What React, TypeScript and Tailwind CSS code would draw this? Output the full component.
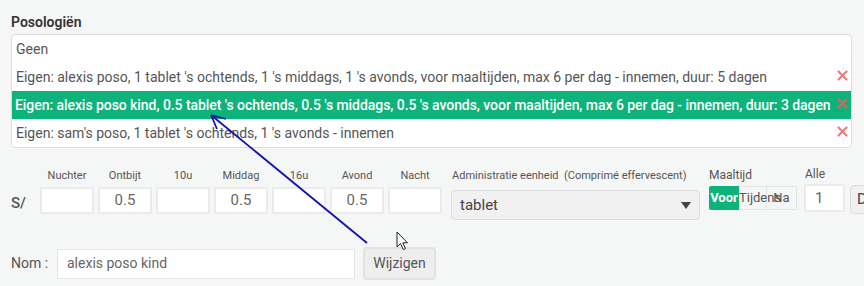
import React from "react";

const rows = [
  { text: "Geen", del: false, active: false },
  {
    text: "Eigen: alexis poso, 1 tablet 's ochtends, 1 's middags, 1 's avonds, voor maaltijden, max 6 per dag - innemen, duur: 5 dagen",
    del: true,
    active: false,
  },
  {
    text: "Eigen: alexis poso kind, 0.5 tablet 's ochtends, 0.5 's middags, 0.5 's avonds, voor maaltijden, max 6 per dag - innemen, duur: 3 dagen",
    del: true,
    active: true,
  },
  { text: "Eigen: sam's poso, 1 tablet 's ochtends, 1 's avonds - innemen", del: true, active: false },
];

const slots = [
  { label: "Nuchter", value: "" },
  { label: "Ontbijt", value: "0.5" },
  { label: "10u", value: "" },
  { label: "Middag", value: "0.5" },
  { label: "16u", value: "" },
  { label: "Avond", value: "0.5" },
  { label: "Nacht", value: "" },
];

export default function App() {
  return (
    <div
      className="relative w-[864px] h-[286px] overflow-hidden bg-[#f5f6f6] text-[#555] px-[11px] pt-[13px]"
      style={{ fontFamily: "Roboto, 'Liberation Sans', sans-serif" }}
    >
      <div className="text-[14px] leading-[18px] font-semibold text-[#333] mb-[3px]">Posologiën</div>

      {/* posology list */}
      <div className="w-[841px] bg-white border border-[#ddd] rounded-[4px] overflow-hidden">
        {rows.map((r, i) => (
          <div
            key={i}
            className={
              r.active
                ? "h-[28px] flex items-center justify-between pl-[3px] pr-[3px] bg-[#0db37b] text-white font-medium tracking-[-0.06px]"
                : "h-[28px] flex items-center justify-between pl-[4px] pr-[3px]"
            }
          >
            <span className="text-[14px] whitespace-nowrap">{r.text}</span>
            {r.del && (
              <svg width="11" height="11" viewBox="0 0 11 11" className="mb-[4px] shrink-0">
                <path
                  d="M1.5 1.5 L9.5 9.5 M9.5 1.5 L1.5 9.5"
                  stroke={r.active ? "#c07066" : "#e88080"}
                  strokeWidth="2.2"
                  strokeLinecap="round"
                />
              </svg>
            )}
          </div>
        ))}
      </div>

      {/* dosage row */}
      <div className="flex items-start mt-[21px] h-[48px]">
        <div className="w-[29px] shrink-0 pt-[23px] text-[15px] font-medium text-[#555]">S/</div>
        <div className="flex gap-[4px] shrink-0">
          {slots.map((s) => (
            <div key={s.label} className="w-[54px] shrink-0 flex flex-col items-center">
              <div className="text-[11px] leading-[14px] text-[#555]">{s.label}</div>
              <div className="mt-[4px] w-[54px] h-[27px] bg-white border-2 border-[#ebebeb] flex items-center justify-center text-[15px] text-[#666]">
                {s.value}
              </div>
            </div>
          ))}
        </div>

        <div className="ml-[9px] w-[249px] shrink-0 flex flex-col">
          <div className="text-[11px] leading-[14px] whitespace-nowrap pl-[1px]">
            Administratie eenheid&nbsp; (Comprimé effervescent)
          </div>
          <div className="mt-[7px] h-[30px] bg-[#f1f1f1] border border-[#dcdcdc] rounded-[4px] flex items-center justify-between pl-[8px] pr-[8px]">
            <span className="text-[15px] text-[#444]">tablet</span>
            <svg width="10" height="7" viewBox="0 0 10 7">
              <path d="M0 0 L10 0 L5 7 Z" fill="#444" />
            </svg>
          </div>
        </div>

        <div className="ml-[9px] shrink-0 flex flex-col">
          <div className="text-[12px] leading-[14px] -mt-[1px]">Maaltijd</div>
          <div className="mt-[4px] flex h-[24px]">
            <div className="w-[30px] bg-[#0db37b] text-white font-bold text-[13px] flex items-center justify-center rounded-l-[2px]">
              Voor
            </div>
            <div className="w-[28px] border border-[#e3e3e3] border-l-0 text-[13px] flex items-center overflow-visible whitespace-nowrap">
              Tijdens
            </div>
            <div className="w-[30px] border border-[#e3e3e3] border-l-0 text-[13px] flex items-center justify-center rounded-r-[2px]">
              Na
            </div>
          </div>
        </div>

        <div className="ml-[7px] shrink-0 flex flex-col">
          <div className="text-[12px] leading-[14px] -mt-[2px] pl-[1px]">Alle</div>
          <div className="mt-[3px] w-[41px] h-[28px] bg-white border-2 border-[#ebebeb] flex items-center pl-[9px] text-[15px] text-[#666]">
            1
          </div>
        </div>

        <div className="ml-[5px] mt-[16px] shrink-0 w-[40px] h-[29px] bg-[#f1f1f1] border border-[#dcdcdc] rounded-[4px] flex items-center pl-[6px] text-[15px] text-[#444]">
          D
        </div>
      </div>

      {/* name row */}
      <div className="flex items-center mt-[30px]">
        <div className="w-[46px] text-[14px] text-[#555]">Nom :</div>
        <div className="w-[298px] h-[30px] bg-white border border-[#e6e6e6] flex items-center pl-[9px] text-[14px] text-[#666]">
          alexis poso kind
        </div>
        <button className="ml-[8px] w-[73px] h-[33px] bg-[#eeeeee] border-2 border-[#e2e2e2] rounded-[4px] text-[14px] text-[#555] flex items-center justify-center">
          Wijzigen
        </button>
      </div>

      {/* annotation arrow */}
      <svg className="absolute left-0 top-0 pointer-events-none" width="864" height="286">
        <line x1="367" y1="243" x2="211" y2="115" stroke="#1212b0" strokeWidth="1.8" />
        <path d="M211 115 L226 119 M211 115 L217 129" stroke="#1212b0" strokeWidth="1.8" fill="none" />
      </svg>

      {/* mouse cursor */}
      <svg className="absolute left-[396px] top-[231px]" width="14" height="22" viewBox="0 0 14 22">
        <path
          d="M1 1 L1 16 L4.5 12.5 L7.2 18.5 L9.4 17.5 L6.8 11.8 L11.5 11.8 Z"
          fill="white"
          stroke="#222"
          strokeWidth="1"
          strokeLinejoin="round"
        />
      </svg>
    </div>
  );
}
